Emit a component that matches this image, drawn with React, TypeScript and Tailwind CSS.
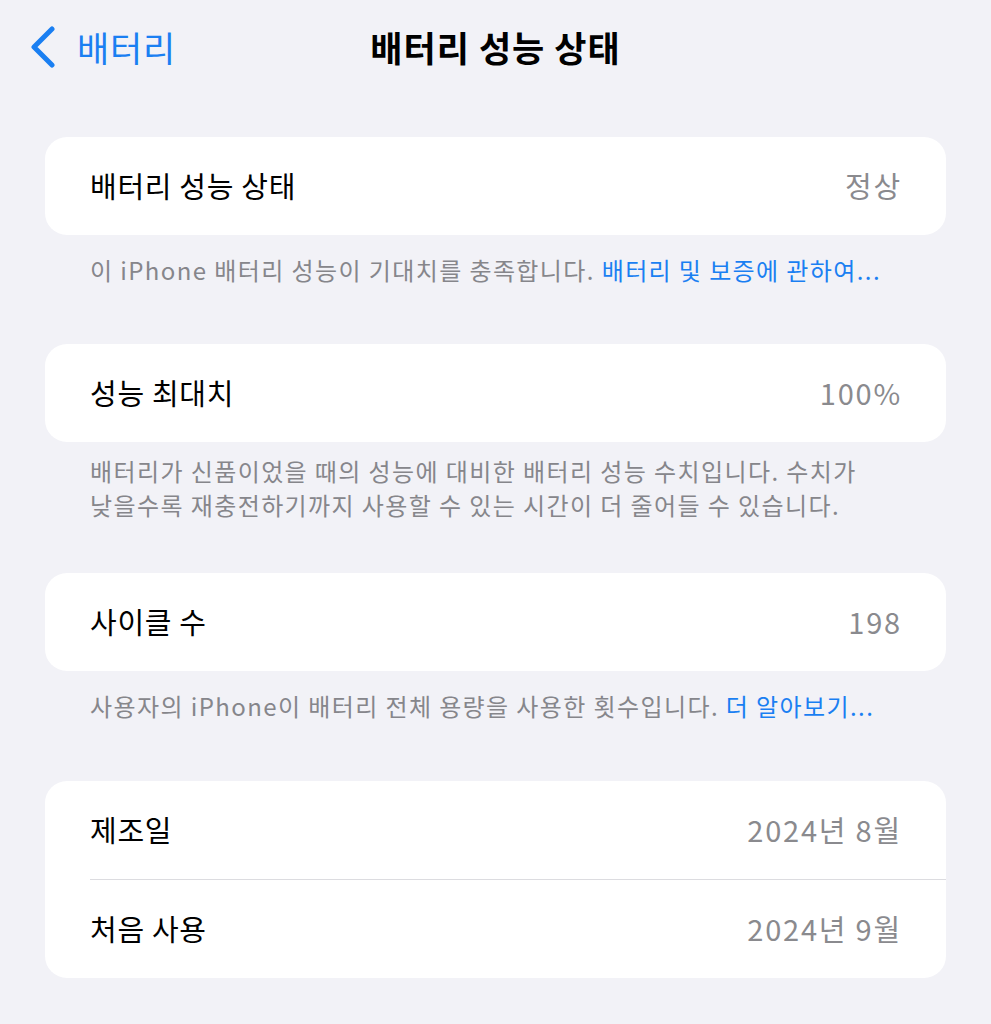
import React from "react";

const font = { fontFamily: '"Noto Sans CJK KR", "Noto Sans", sans-serif' };

function Row({ label, value }: { label: string; value: string }) {
  return (
    <div className="flex h-[98px] items-center justify-between pl-[45px] pr-[44px]">
      <span className="text-[29px] tracking-[0.7px] text-black">{label}</span>
      <span className="text-[29px] tracking-[1.8px] text-[#8a8a8e]">{value}</span>
    </div>
  );
}

export default function App() {
  return (
    <div className="min-h-screen bg-[#f2f2f7] antialiased" style={font}>
      <div className="grid h-[94px] grid-cols-[1fr_auto_1fr] items-center">
        <div className="flex items-center pl-[30px]">
          <svg width="26" height="42" viewBox="0 0 26 42" fill="none">
            <path d="M22 3 L4 21 L22 39" stroke="#1a7ff2" strokeWidth="5" strokeLinecap="round" strokeLinejoin="round" />
          </svg>
          <span className="ml-[21px] text-[35px] tracking-[0.8px] text-[#1a7ff2]">배터리</span>
        </div>
        <div className="text-[35px] font-bold tracking-[1px] text-black">배터리 성능 상태</div>
        <div />
      </div>

      <div className="px-[45px] pt-[43px]">
        <div className="overflow-hidden rounded-[22px] bg-white">
          <Row label="배터리 성능 상태" value="정상" />
        </div>
        <p className="px-[45px] pt-[18px] text-[24px] leading-[34px] tracking-[1.4px] text-[#86868b]">
          이 iPhone 배터리 성능이 기대치를 충족합니다.{" "}
          <span className="text-[#1a7ff2]">배터리 및 보증에 관하여...</span>
        </p>

        <div className="mt-[57px] overflow-hidden rounded-[22px] bg-white">
          <Row label="성능 최대치" value="100%" />
        </div>
        <p className="px-[45px] pt-[12px] text-[24px] leading-[34px] tracking-[1.4px] text-[#86868b]">
          배터리가 신품이었을 때의 성능에 대비한 배터리 성능 수치입니다. 수치가
          <br />
          낮을수록 재충전하기까지 사용할 수 있는 시간이 더 줄어들 수 있습니다.
        </p>

        <div className="mt-[51px] overflow-hidden rounded-[22px] bg-white">
          <Row label="사이클 수" value="198" />
        </div>
        <p className="px-[45px] pt-[18px] text-[24px] leading-[34px] tracking-[1.4px] text-[#86868b]">
          사용자의 iPhone이 배터리 전체 용량을 사용한 횟수입니다.{" "}
          <span className="text-[#1a7ff2]">더 알아보기...</span>
        </p>

        <div className="mt-[58px] overflow-hidden rounded-[22px] bg-white">
          <Row label="제조일" value="2024년 8월" />
          <div className="ml-[45px] h-px bg-[#dcdce0]" />
          <Row label="처음 사용" value="2024년 9월" />
        </div>
      </div>
    </div>
  );
}
